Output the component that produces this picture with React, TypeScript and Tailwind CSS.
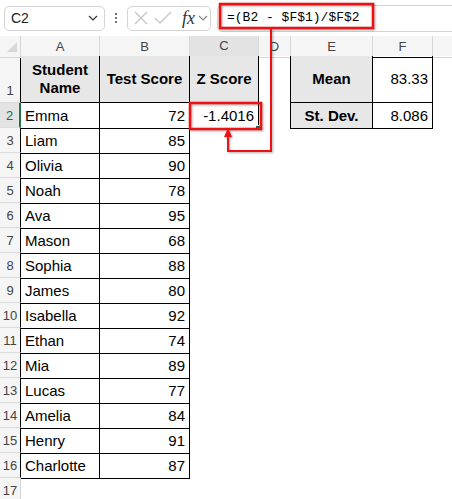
import React from "react";

const COLS = "grid grid-cols-[21px_79px_90px_69px_32px_82px_60px_1fr]";

const students: [string, number][] = [
  ["Emma", 72],
  ["Liam", 85],
  ["Olivia", 90],
  ["Noah", 78],
  ["Ava", 95],
  ["Mason", 68],
  ["Sophia", 88],
  ["James", 80],
  ["Isabella", 92],
  ["Ethan", 74],
  ["Mia", 89],
  ["Lucas", 77],
  ["Amelia", 84],
  ["Henry", 91],
  ["Charlotte", 87],
];

function Chevron({ className }: { className?: string }) {
  return (
    <svg width="10" height="6" viewBox="0 0 10 6" className={className}>
      <path d="M1 1 L5 5 L9 1" fill="none" stroke="currentColor" strokeWidth="1.2" />
    </svg>
  );
}

function TopBar() {
  return (
    <div className="flex items-center h-[36px] bg-white pl-[4px]">
      {/* name box */}
      <div className="flex items-center justify-between w-[101px] h-[25px] border border-[#d4d4d4] rounded-[5px] pl-[6px] pr-[6px] text-[14px] text-[#222]">
        <span>C2</span>
        <Chevron className="text-[#333]" />
      </div>
      {/* dots */}
      <div className="flex flex-col items-center justify-center gap-[2px] w-[22px]">
        <span className="w-[2px] h-[2px] bg-[#444] rounded-full" />
        <span className="w-[2px] h-[2px] bg-[#444] rounded-full" />
        <span className="w-[2px] h-[2px] bg-[#444] rounded-full" />
      </div>
      {/* cancel / enter / fx */}
      <div className="flex items-center w-[84px] h-[25px] border border-[#d4d4d4] rounded-[5px] pl-[6px]">
        <svg width="14" height="14" viewBox="0 0 14 14" className="text-[#c4c4c4]">
          <path d="M1 1 L13 13 M13 1 L1 13" stroke="currentColor" strokeWidth="1.3" />
        </svg>
        <svg width="18" height="14" viewBox="0 0 18 14" className="ml-[6px] text-[#c4c4c4]">
          <path d="M1 7 L6 12 L17 1" fill="none" stroke="currentColor" strokeWidth="1.3" />
        </svg>
        <span className="ml-[10px] font-['Liberation_Serif'] italic text-[18px] leading-none text-[#333]">fx</span>
        <Chevron className="ml-[3px] text-[#888]" />
      </div>
      {/* formula box */}
      <div className="ml-[6px] flex-1 h-[27px] border border-[#d4d4d4] border-r-0 rounded-l-[5px] flex items-center pl-[9px]">
        <span className="font-['Liberation_Mono'] text-[13px] text-black whitespace-pre">=(B2 - $F$1)/$F$2</span>
      </div>
    </div>
  );
}

function ColumnHeaders() {
  const hd = "flex items-center justify-center border-r border-[#d6d6d6] text-[13px] text-[#444]";
  return (
    <div className={`${COLS} h-[20px] bg-[#f5f5f5]`}>
      <div className="relative border-r border-b border-[#d6d6d6]">
        <svg width="21" height="20" className="absolute left-0 top-0">
          <polygon points="17,6 17,16 7,16" fill="#d8d8d8" />
        </svg>
      </div>
      <div className={`${hd} border-b border-b-black`}>A</div>
      <div className={`${hd} border-b border-b-black`}>B</div>
      <div className={`${hd} bg-[#e3e3e3] text-[#1e6b41] border-b-2 border-b-[#217346]`}>C</div>
      <div className={`${hd} border-b border-b-[#d6d6d6]`}>D</div>
      <div className={`${hd} border-b border-b-black`}>E</div>
      <div className={`${hd} border-b border-b-black`}>F</div>
      <div className={`${hd} border-r-0 border-b border-b-[#d6d6d6]`}></div>
    </div>
  );
}

function RowHeader({ n, h, selected, edge }: { n: number; h: string; selected?: boolean; edge?: boolean }) {
  return (
    <div
      className={`${h} flex items-end justify-center pb-[2px] border-b border-[#dcdcdc] text-[13px] ${
        selected
          ? "bg-[#e3e3e3] text-[#1e6b41] border-r-2 border-r-[#217346]"
          : edge
            ? "bg-[#f5f5f5] text-[#444] border-r border-r-black"
            : "bg-[#f5f5f5] text-[#444] border-r border-r-[#d6d6d6]"
      }`}
    >
      {n}
    </div>
  );
}

export default function App() {
  const cell = "border-r border-b border-black text-[15px] text-black";
  const head = "bg-[#e7e7e7] font-bold flex items-center justify-center text-center leading-[18px]";
  return (
    <div className="relative w-[452px] h-[499px] overflow-hidden bg-white font-['Liberation_Sans',Arial,sans-serif]">
      <TopBar />
      <ColumnHeaders />

      {/* row 1 */}
      <div className={`${COLS} h-[47px]`}>
        <RowHeader n={1} h="h-[47px]" edge />
        <div className={`${cell} ${head}`}>
          Student
          <br />
          Name
        </div>
        <div className={`${cell} ${head}`}>Test Score</div>
        <div className={`${cell} ${head}`}>Z Score</div>
        <div className="border-r border-black" />
        <div className={`${cell} ${head}`}>Mean</div>
        <div className={`${cell} flex items-center justify-end pr-[4px]`}>83.33</div>
        <div />
      </div>

      {/* rows 2-16 */}
      {students.map(([name, score], i) => {
        const r = i + 2;
        return (
          <div key={name} className={`${COLS} h-[25px]`}>
            <RowHeader n={r} h="h-[25px]" selected={r === 2} edge />
            <div className={`${cell} flex items-center pl-[4px] pt-[2px]`}>{name}</div>
            <div className={`${cell} flex items-center justify-end pr-[4px] pt-[2px]`}>{score}</div>
            {r === 2 ? (
              <>
                <div className={`${cell} relative flex items-center justify-end pr-[4px] pt-[2px]`}>
                  -1.4016
                  <span className="absolute right-[-3px] bottom-[-3px] w-[6px] h-[6px] bg-[#217346] border border-white" />
                </div>
                <div className="border-r border-black" />
                <div className={`${cell} ${head} pt-[2px]`}>St. Dev.</div>
                <div className={`${cell} flex items-center justify-end pr-[4px] pt-[2px]`}>8.086</div>
              </>
            ) : (
              <>
                <div />
                <div />
                <div />
                <div />
              </>
            )}
            <div />
          </div>
        );
      })}

      {/* row 17 */}
      <div className={`${COLS} h-[25px]`}>
        <RowHeader n={17} h="h-[25px]" />
      </div>

      {/* annotation overlay */}
      <svg
        width="452"
        height="499"
        className="absolute left-0 top-0 pointer-events-none drop-shadow-[1px_1px_1px_rgba(0,0,0,0.35)]"
      >
        <rect x="220" y="4" width="153" height="24" fill="none" stroke="#ee1111" strokeWidth="2.5" />
        <rect x="190" y="103" width="71" height="26" fill="none" stroke="#ee1111" strokeWidth="2.5" />
        <path d="M271 29 V151 H228 V136" fill="none" stroke="#ee1111" strokeWidth="2" />
        <polygon points="228,128 224,137 232,137" fill="#ee1111" />
      </svg>
    </div>
  );
}
